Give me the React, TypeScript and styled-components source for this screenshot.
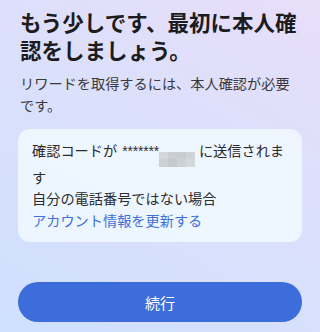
import React from 'react';
import styled, { createGlobalStyle } from 'styled-components';

const FONT = '"Noto Sans CJK JP", "Noto Sans", sans-serif';

const GlobalStyle = createGlobalStyle`
  html, body {
    margin: 0;
    padding: 0;
  }
  body {
    font-family: ${FONT};
  }
`;

const Screen = styled.div`
  width: 320px;
  height: 332px;
  box-sizing: border-box;
  padding: 8px 18px 10px 18px;
  display: flex;
  flex-direction: column;
  background: linear-gradient(30deg, #cfe0ff 0%, #dbe0fb 55%, #e8defa 100%);
  overflow: hidden;
`;

const Title = styled.h1`
  margin: 0 0 0 2px;
  color: #1c1c1e;
  font-size: 21.5px;
  line-height: 28px;
  font-weight: 700;
  letter-spacing: 0;
`;

const Lead = styled.p`
  margin: 8px 0 0 2px;
  color: #3a3a3c;
  font-size: 14.2px;
  line-height: 22px;
  font-weight: 400;
`;

const Card = styled.div`
  margin-top: 13px;
  padding: 11px 14px 11px 14px;
  background: rgba(240, 248, 255, 0.88);
  border-radius: 12px;
`;

const CardText = styled.p`
  margin: 0;
  color: #2c2c2e;
  font-size: 14.2px;
  line-height: 21.5px;
`;

const Stars = styled.span`
  font-family: "Liberation Sans", sans-serif;
  font-size: 14px;
  line-height: 1;
  letter-spacing: -0.2px;
  margin-left: 5px;
`;

const Mosaic = styled.span`
  display: inline-grid;
  grid-template-columns: repeat(4, 9px);
  grid-template-rows: repeat(2, 7.5px);
  width: 36px;
  height: 15px;
  margin: 0 4px 0 0;
  vertical-align: -3px;
`;

const Cell = styled.span<{ $shade: string }>`
  background: ${(p) => p.$shade};
`;

const Link = styled.a`
  display: block;
  color: #3f6fdc;
  font-size: 14.2px;
  line-height: 21.5px;
  text-decoration: none;
`;

const Spacer = styled.div`
  flex: 1;
`;

const PrimaryButton = styled.button`
  width: 284px;
  height: 40px;
  border: none;
  border-radius: 20px;
  background: #3d6cdb;
  color: #ffffff;
  font-family: ${FONT};
  font-size: 15px;
  cursor: pointer;
`;

const shades = ['#d3d6da', '#cbcfd4', '#c7ccd1', '#d0d3d7', '#cdd1d6', '#c4c9cf', '#ced2d6', '#d5d8db'];

export default function App() {
  return (
    <>
      <GlobalStyle />
      <Screen>
        <Title>もう少しです、最初に本人確認をしましょう。</Title>
        <Lead>リワードを取得するには、本人確認が必要です。</Lead>
        <Card>
          <CardText>
            <span>確認コードが</span>
            <Stars>*******</Stars>
            <Mosaic>
              {shades.map((s, i) => (
                <Cell key={i} $shade={s} />
              ))}
            </Mosaic>
            <span>に送信されま</span>
            <span>す</span>
          </CardText>
          <CardText>自分の電話番号ではない場合</CardText>
          <Link href="#">アカウント情報を更新する</Link>
        </Card>
        <Spacer />
        <PrimaryButton>続行</PrimaryButton>
      </Screen>
    </>
  );
}
